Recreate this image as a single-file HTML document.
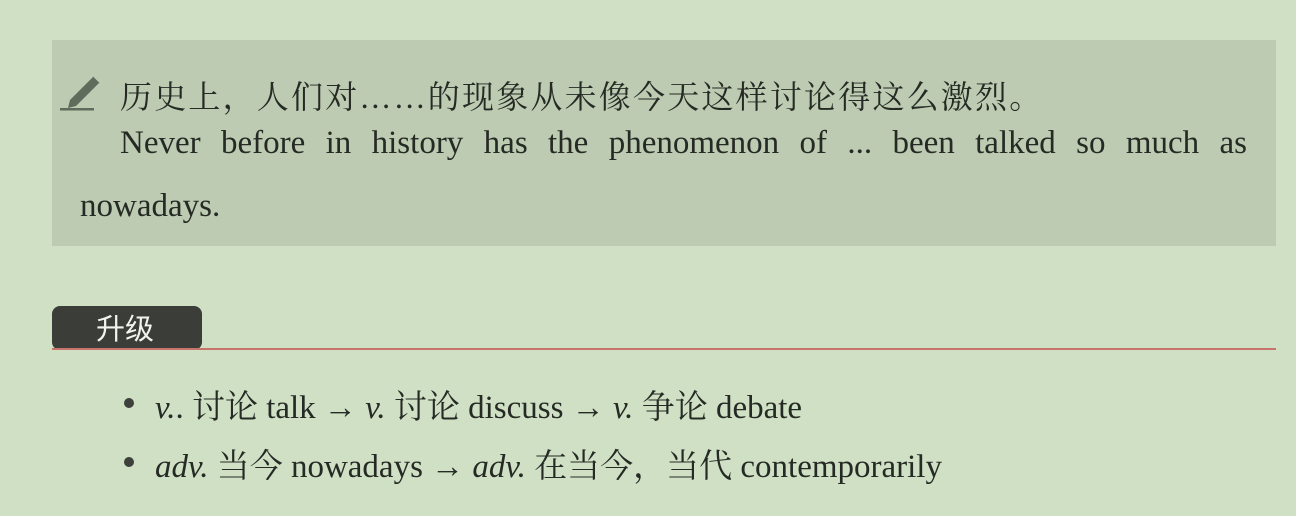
<!DOCTYPE html>
<html><head><meta charset="utf-8"><style>
body{margin:0;width:1296px;height:516px;background:#cfe0c5;position:relative;overflow:hidden;font-family:"Liberation Serif","Times New Roman","Noto Serif CJK SC",serif;color:#262a24}
.box{position:absolute;left:52px;top:40px;width:1224px;height:206px;background:#bccbb1}
.t{position:absolute;white-space:nowrap}
.zh{left:120px;top:72px;font-size:32px;letter-spacing:2.2px}
.en{left:120px;top:125px;width:1127px;font-size:33px;text-align:justify;text-align-last:justify}
.en2{left:80px;top:188px;font-size:33px}
.tag{position:absolute;left:52px;top:306px;width:150px;height:44px;background:#3b3d39;border-radius:8px;color:#f2f2ee;font-family:"Noto Sans CJK SC",sans-serif;font-size:29px;line-height:42px;padding-left:44px;box-sizing:border-box}
.line{position:absolute;left:52px;top:348px;width:1224px;height:2px;background:#c8746c}
.li{font-size:33px;left:155px}
.dot{position:absolute;width:10px;height:10px;border-radius:50%;background:#3d403b;left:124px}
i{font-style:italic}
</style></head><body>
<div class="box"></div>
<svg style="position:absolute;left:56px;top:68px" width="50" height="44" viewBox="0 0 50 44"><path d="M14 32 L38 8 L44 14 L20 38 L12 40 Z" fill="#5f6b5b"/><path d="M38 8 L44 14" stroke="#bccbb1" stroke-width="2"/><rect x="4" y="40" width="34" height="2.5" fill="#5f6b5b"/></svg>
<div class="t zh">历史上，人们对……的现象从未像今天这样讨论得这么激烈。</div>
<div class="t en">Never before in history has the phenomenon of ... been talked so much as</div>
<div class="t en2">nowadays.</div>
<div class="tag">升级</div>
<div class="line"></div>
<div class="dot" style="top:398px"></div>
<div class="t li" style="top:381px"><i>v.</i>. 讨论 talk → <i>v.</i> 讨论 discuss → <i>v.</i> 争论 debate</div>
<div class="dot" style="top:457px"></div>
<div class="t li" style="top:440px"><i>adv.</i> 当今 nowadays → <i>adv.</i> 在当今，当代 contemporarily</div>
</body></html>
